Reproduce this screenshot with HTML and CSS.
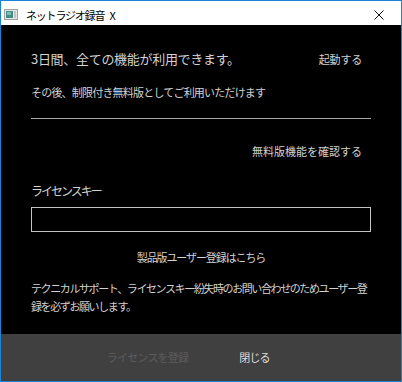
FILE: index.html
```html
<!DOCTYPE html>
<html lang="ja">
<head>
  <meta charset="UTF-8" />
  <title>ネットラジオ録音 X</title>
  <link rel="stylesheet" href="styles.css">
</head>
<body>
  <div class="window">
    <div class="titlebar">
      <svg class="app-icon" width="14" height="11" viewBox="0 0 14 11">
        <rect x="0.5" y="0.5" width="13" height="10" fill="#e8e8e8" stroke="#a0a0a0"/>
        <rect x="2" y="2" width="7" height="7" fill="#3f8f86"/>
        <rect x="3" y="3" width="4" height="3" fill="#7fc0b4"/>
        <rect x="10" y="2" width="2" height="7" fill="#c4c4c4"/>
      </svg>
      <span class="title">ネットラジオ録音 X</span>
      <button class="close-btn" aria-label="閉じる">
        <svg width="10" height="10" viewBox="0 0 10 10">
          <path d="M0.5 0.5 L9.5 9.5 M9.5 0.5 L0.5 9.5" stroke="#111" stroke-width="1"/>
        </svg>
      </button>
    </div>

    <div class="content">
      <div class="trial-row">
        <span class="trial-text">3日間、全ての機能が利用できます。</span>
        <span class="link start-link">起動する</span>
      </div>
      <div class="note">その後、制限付き無料版としてご利用いただけます</div>
      <div class="divider"></div>
      <div class="link check-link">無料版機能を確認する</div>
      <div class="key-label">ライセンスキー</div>
      <input class="key-input" type="text">
      <div class="link register-link">製品版ユーザー登録はこちら</div>
      <p class="support">テクニカルサポート、ライセンスキー紛失時のお問い合わせのためユーザー登<br>録を必ずお願いします。</p>
    </div>

    <div class="footer">
      <button class="footer-btn disabled">ライセンスを登録</button>
      <button class="footer-btn">閉じる</button>
    </div>
  </div>
</body>
</html>
```

FILE: styles.css
```css
* { box-sizing: border-box; font-family: 'Noto Sans CJK JP', 'Noto Sans', sans-serif; }
body {
  margin: 0;
  padding: 0;
  background: #000;
}

.window {
  width: 402px;
  height: 382px;
  border: 1px solid #1883d7;
  display: flex;
  flex-direction: column;
  background: #000;
}

.titlebar {
  height: 24px;
  background: #fff;
  display: flex;
  align-items: center;
  flex-shrink: 0;
}

.app-icon { margin: 2px 0 0 3px; }

.title {
  margin-left: 8px;
  font-size: 11px;
  letter-spacing: -1.2px;
  word-spacing: 4px;
  color: #000;
  padding-top: 3px;
}

.close-btn {
  margin-left: auto;
  width: 46px;
  height: 24px;
  border: none;
  background: transparent;
  display: flex;
  align-items: center;
  justify-content: center;
  padding: 4px 0 0 2px;
}

.content {
  flex: 1;
  padding: 0 30px;
  color: #d2d2d2;
}

.trial-row {
  margin-top: 25px;
  display: flex;
  justify-content: space-between;
  align-items: baseline;
  line-height: 18px;
}

.trial-text { font-size: 13px; letter-spacing: -0.3px; }

.link { font-size: 11px; letter-spacing: -0.2px; }
.start-link { margin-right: 9px; }

.note {
  margin-top: 16px;
  line-height: 16px;
  font-size: 11px;
  letter-spacing: -0.8px;
}

.divider {
  margin-top: 18px;
  border-top: 1px solid #a8a8a8;
}

.check-link {
  margin-top: 24px;
  line-height: 16px;
  text-align: right;
  letter-spacing: 0;
  padding-right: 9px;
}

.key-label {
  margin-top: 23px;
  line-height: 18px;
  font-size: 12px;
  letter-spacing: -2px;
}

.key-input {
  display: block;
  margin-top: 7px;
  width: 100%;
  height: 25px;
  background: #000;
  border: 1px solid #c4c4c4;
  color: #d2d2d2;
  outline: none;
}

.register-link {
  margin-top: 17px;
  line-height: 16px;
  text-align: center;
  letter-spacing: -1.1px;
}

.support {
  margin: 14px 0 0;
  line-height: 18px;
  font-size: 11px;
  letter-spacing: -1.4px;
  white-space: nowrap;
}

.footer {
  height: 47px;
  background: #404040;
  display: flex;
  justify-content: center;
  align-items: center;
  gap: 7px;
  flex-shrink: 0;
}

.footer-btn {
  width: 100px;
  border: none;
  background: transparent;
  color: #dcdcdc;
  font-size: 11px;
  letter-spacing: -0.8px;
  padding: 0 0 2px;
}

.footer-btn.disabled { color: #5c5c5c; }
```
